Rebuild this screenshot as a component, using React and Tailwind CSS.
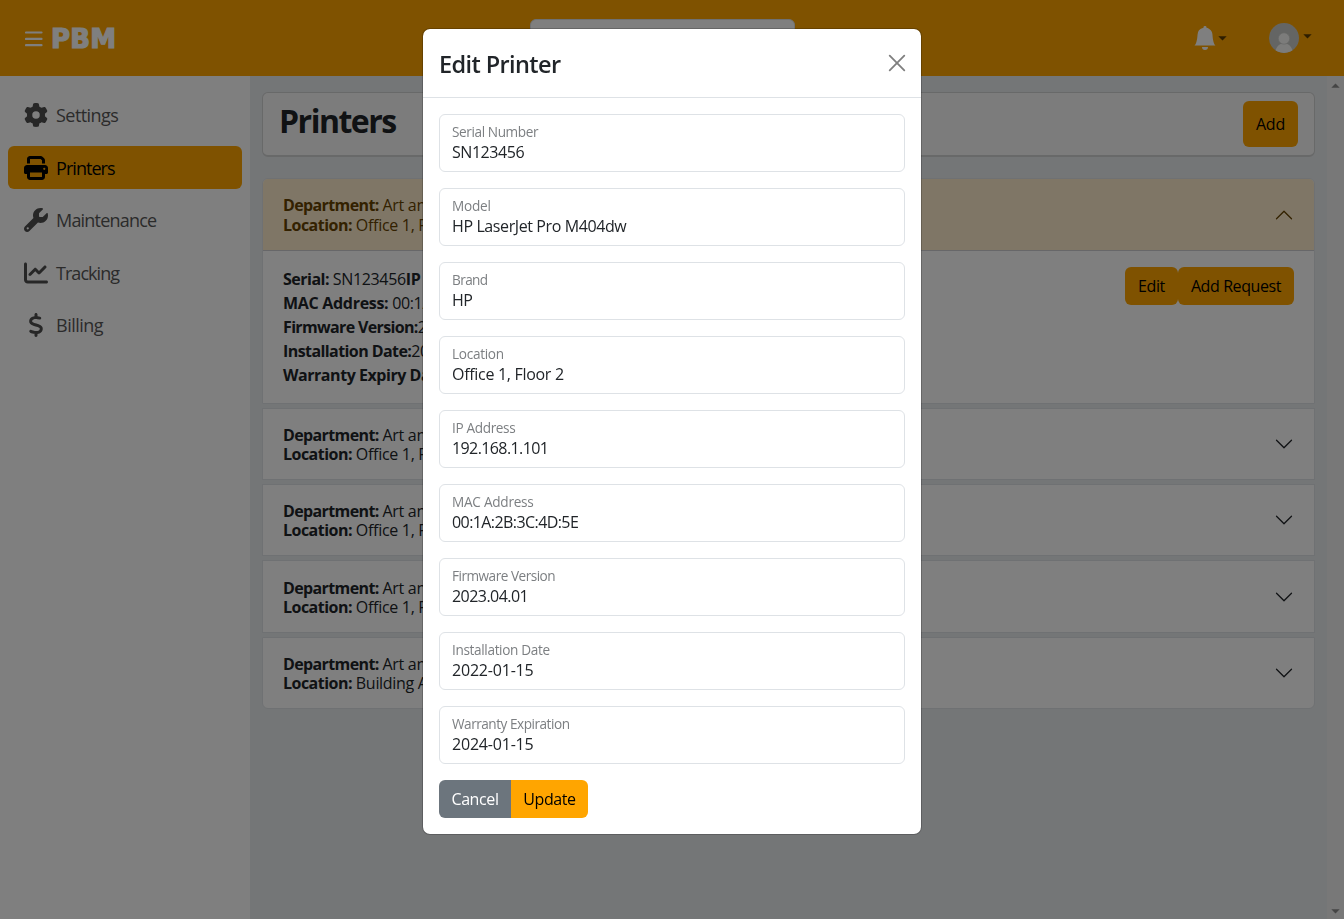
import React from "react";
import { FaGear, FaPrint, FaWrench, FaChartLine, FaDollarSign } from "react-icons/fa6";
import { BsBellFill } from "react-icons/bs";

const navItems = [
  { label: "Settings", Icon: FaGear, spacing: "tracking-[-0.550px]" },
  { label: "Printers", Icon: FaPrint, active: true, spacing: "tracking-[-0.950px]" },
  { label: "Maintenance", Icon: FaWrench, spacing: "tracking-[-0.800px]" },
  { label: "Tracking", Icon: FaChartLine, spacing: "tracking-[-0.950px]" },
  { label: "Billing", Icon: FaDollarSign, spacing: "tracking-[-0.500px]" },
];

const printers = [
  { location: "Office 1, Floor 2", open: true },
  { location: "Office 1, Floor 3" },
  { location: "Office 1, Floor 4" },
  { location: "Office 1, Floor 5" },
  { location: "Building A, Floor 1" },
];

const fields = [
  ["Serial Number", "SN123456", "tracking-[-0.400px]", "tracking-[-0.450px]"],
  ["Model", "HP LaserJet Pro M404dw", "tracking-[-0.200px]", "tracking-[-0.400px]"],
  ["Brand", "HP", "tracking-[-0.600px]", "tracking-[-0.500px]"],
  ["Location", "Office 1, Floor 2", "tracking-[-0.300px]", "tracking-[-0.300px]"],
  ["IP Address", "192.168.1.101", "tracking-[-0.350px]", "tracking-[-0.600px]"],
  ["MAC Address", "00:1A:2B:3C:4D:5E", "tracking-[-0.250px]", "tracking-[-0.580px]"],
  ["Firmware Version", "2023.04.01", "tracking-[-0.500px]", "tracking-[-0.550px]"],
  ["Installation Date", "2022-01-15", "tracking-[-0.350px]", "tracking-[-0.200px]"],
  ["Warranty Expiration", "2024-01-15", "tracking-[-0.480px]", "tracking-[-0.200px]"],
];

function Caret({ className }) {
  return (
    <svg className={className} width="9" height="5" viewBox="0 0 9 5">
      <path d="M0.3 0.3H8.7L4.5 4.6Z" fill="currentColor" />
    </svg>
  );
}

function Chevron({ className }) {
  return (
    <svg className={className} width="20" height="20" viewBox="0 0 16 16" fill="currentColor">
      <path d="M1.646 4.646a.5.5 0 0 1 .708 0L8 10.293l5.646-5.647a.5.5 0 0 1 .708.708l-6 6a.5.5 0 0 1-.708 0l-6-6a.5.5 0 0 1 0-.708z" />
    </svg>
  );
}

function Header() {
  return (
    <header className="flex h-[76px] shrink-0 items-center justify-between bg-[#ffa500] pl-[25px] pr-8">
      <div className="flex w-[287px] items-center">
        <svg width="18" height="16" viewBox="0 0 18 16" className="mt-[2px] text-white" stroke="currentColor" strokeWidth="2.200" strokeLinecap="round">
          <path d="M1 1.500H16.500M1 7.900H16.500M1 14.200H16.500" />
        </svg>
        <span className="mt-[2px] ml-[8px] font-['DejaVu_Sans',sans-serif] text-[26px] leading-none font-bold tracking-[0.200px] text-white [-webkit-text-stroke:1.200px_white]">
          PBM
        </span>
      </div>
      <div className="h-[38px] w-[265px] rounded-md border border-[#dee2e6] bg-white" />
      <div className="flex w-[300px] items-center justify-end">
        <BsBellFill className="size-6 text-white" />
        <Caret className="ml-[1px] text-[#5c3c00]" />
        <svg className="ml-[42px]" width="30" height="30" viewBox="0 0 30 30">
          <defs>
            <clipPath id="avatar">
              <circle cx="15" cy="15" r="15" />
            </clipPath>
          </defs>
          <g clipPath="url(#avatar)">
            <rect width="30" height="30" fill="#c9cbc8" />
            <path d="M6 31C6.500 24 10 20.500 15 20.500S23.500 24 24 31Z" fill="#f8f8f6" />
            <circle cx="15" cy="15.500" r="5.700" fill="#f8f8f6" stroke="#c9cbc8" strokeWidth="0.600" />
          </g>
        </svg>
        <Caret className="mb-[4px] ml-[4px] text-[#5c3c00]" />
      </div>
    </header>
  );
}

function Sidebar() {
  return (
    <nav className="flex w-[250px] shrink-0 flex-col gap-[9.600px] bg-white px-2 pt-[17.500px]">
      {navItems.map(({ label, Icon, active, spacing }) => (
        <a
          key={label}
          className={
            active
              ? "flex h-[43px] items-center rounded-md bg-[#ffa500] pl-4 text-black"
              : "flex h-[43px] items-center pl-4 text-[#575757]"
          }
        >
          <Icon className={active ? "size-6 text-black" : "size-6 text-[#4f4f4f]"} />
          <span className={`ml-2 text-[18px] leading-none ${spacing}`}>{label}</span>
        </a>
      ))}
    </nav>
  );
}

function PrinterDetails() {
  return (
    <div className="flex justify-between px-5 py-4">
      <div className="text-[16px] leading-6 tracking-[-0.350px]">
        <p><b className="tracking-[-0.500px]">Serial:</b> SN123456<b>IP Address:</b> 192.168.1.101</p>
        <p><b className="tracking-[-0.300px]">MAC Address:</b> 00:1A:2B:3C:4D:5E</p>
        <p><b className="tracking-[-0.650px]">Firmware Version:</b>2023.04.01</p>
        <p><b className="tracking-[-0.580px]">Installation Date:</b>2022-01-15</p>
        <p><b className="tracking-[-0.450px]">Warranty Expiry Date:</b>2024-01-15</p>
      </div>
      <div className="flex h-[38px] text-[16px] tracking-[-0.400px] text-black">
        <button className="w-[53px] rounded-md bg-[#ffa500]">Edit</button>
        <button className="w-[116px] rounded-md bg-[#ffa500]">Add Request</button>
      </div>
    </div>
  );
}

function Main() {
  return (
    <main className="flex min-w-0 flex-1 flex-col bg-[#e9ecef] pt-4 pr-3 pl-3">
      <div className="flex h-[65px] justify-between rounded-md border border-b-2 border-[#d0d2d2] bg-[#f9f9f9] pr-4 pl-4">
        <h1 className="mt-[9px] text-[32px] leading-[38px] font-bold tracking-[-1.500px]">Printers</h1>
        <button className="mt-2 h-[46px] w-[55px] rounded-md bg-[#ffa500] text-[16px] tracking-[-0.200px] text-black">Add</button>
      </div>
      <div className="mt-[21.400px] flex flex-col gap-1">
        {printers.map((p, i) => (
          <section
            key={i}
            className="overflow-hidden border border-[#dee2e6] bg-white first:rounded-t-md last:rounded-b-md"
          >
            <div
              className={
                p.open
                  ? "flex h-[71.200px] items-center justify-between border-b border-[#cfcfd2] bg-[#ffedcc] px-5 text-[#664200]"
                  : "flex h-[70.400px] items-center justify-between px-5"
              }
            >
              <div className="pt-[2.400px] text-[16px] leading-[19.200px] tracking-[-0.300px]">
                <p><b className="tracking-[-0.620px]">Department:</b> Art and Design</p>
                <p><b className="tracking-[-0.520px]">Location:</b> {p.location}</p>
              </div>
              <Chevron className={p.open ? "mt-[1px] rotate-180" : ""} />
            </div>
            {p.open && <PrinterDetails />}
          </section>
        ))}
      </div>
    </main>
  );
}

function Scrollbar() {
  return (
    <div className="flex w-[17px] shrink-0 flex-col items-center justify-between bg-[#f1f1f1] pt-[7px] pb-[5px] text-[#8a8a8a]">
      <Caret className="rotate-180" />
      <Caret />
    </div>
  );
}

function EditModal() {
  return (
    <div className="fixed inset-0 flex items-start justify-center bg-black/50 pt-7">
      <div className="w-[500px] rounded-lg border border-black/20 bg-white bg-clip-padding">
        <div className="flex h-[69px] items-center justify-between border-b border-[#dee2e6] pr-[14px] pl-4">
          <h2 className="mt-[2px] text-[23.500px] leading-9 font-semibold tracking-[-0.600px]">Edit Printer</h2>
          <svg className="text-[#7f7f7f]" width="20" height="20" viewBox="0 0 20 20" stroke="currentColor" strokeWidth="1.800" strokeLinecap="round">
            <path d="M2.700 2.700L17.300 17.300M17.300 2.700L2.700 17.300" />
          </svg>
        </div>
        <div className="flex flex-col gap-4 p-4">
          {fields.map(([label, value, labelSpacing, valueSpacing]) => (
            <label key={label} className="flex h-[58px] flex-col rounded-md border border-[#dee2e6] pt-[7px] pl-3">
              <span className={`text-[13.600px] leading-5 text-[#7c7f82] ${labelSpacing}`}>{label}</span>
              <span className={`text-[16px] leading-[21px] ${valueSpacing}`}>{value}</span>
            </label>
          ))}
          <div className="flex h-[38px] text-[16px] tracking-[-0.400px]">
            <button className="w-[72px] rounded-l-md bg-[#6c757d] text-white">Cancel</button>
            <button className="w-[77px] rounded-r-md bg-[#ffa500] text-black">Update</button>
          </div>
        </div>
      </div>
    </div>
  );
}

export default function App() {
  return (
    <div className="flex h-[919px] flex-col overflow-hidden font-['Segoe_UI','Open_Sans',sans-serif] text-[#212529]">
      <Header />
      <div className="flex min-h-0 flex-1">
        <Sidebar />
        <Main />
        <Scrollbar />
      </div>
      <EditModal />
    </div>
  );
}
